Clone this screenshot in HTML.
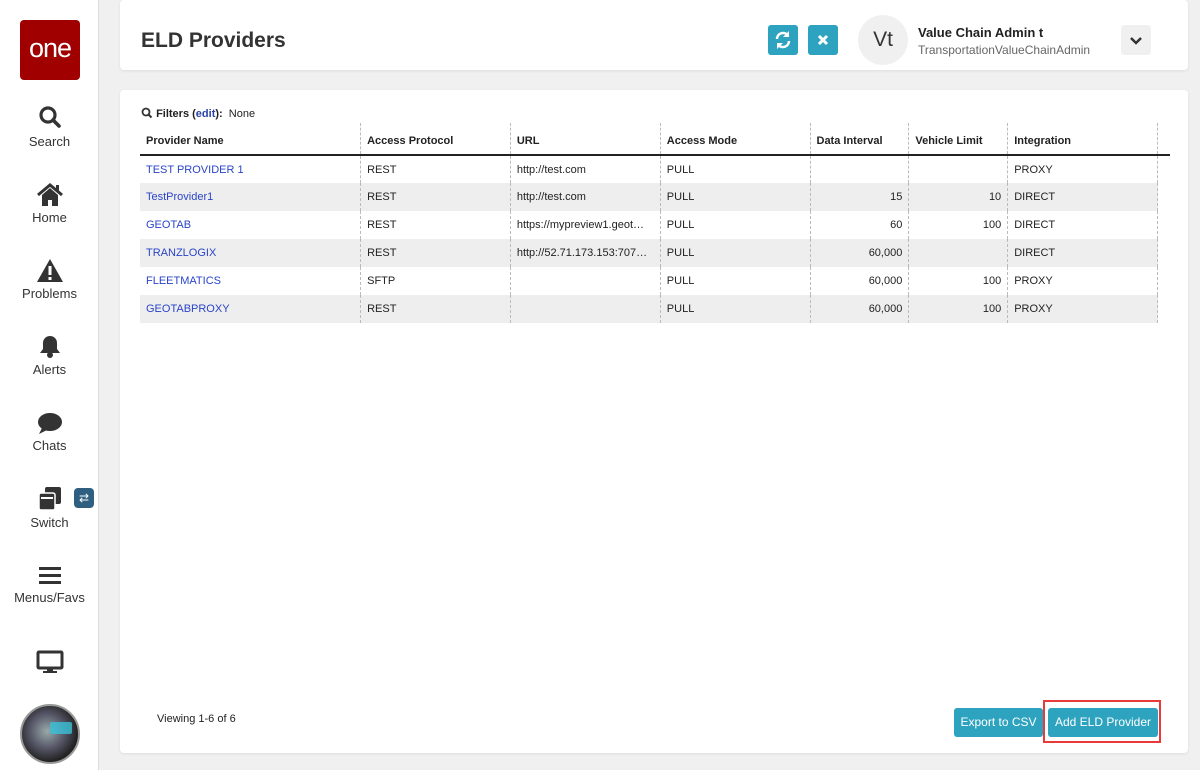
<!DOCTYPE html>
<html><head><meta charset="utf-8"><style>
*{margin:0;padding:0;box-sizing:border-box}
body{width:1200px;height:770px;background:#f0f0f0;font-family:"Liberation Sans",sans-serif;position:relative;overflow:hidden;color:#222}
.side{position:absolute;left:0;top:0;width:99px;height:770px;background:#fff;border-right:1px solid #ddd}
.logo{position:absolute;left:20px;top:20px;width:60px;height:60px;background:#a00000;border-radius:4px;color:#fff;font-size:27px;text-align:center;line-height:56px;letter-spacing:-1px}
.nav{position:absolute;left:0;width:99px;text-align:center;font-size:13px;color:#333}
.nav svg{display:block;margin:0 auto 3px}
.card{position:absolute;background:#fff;border-radius:4px;box-shadow:0 1px 3px rgba(0,0,0,.08)}
.btn{position:absolute;background:#2ea3bf;border-radius:3px;color:#fff}
table{border-collapse:collapse;position:absolute;left:20px;top:33px;width:1030px;font-size:11px}
th{text-align:left;font-weight:bold;height:32px;padding:0 6px;border-bottom:2px solid #222;border-right:1px dashed #bbb;vertical-align:bottom;padding-bottom:7px}
td{height:28px;padding:0 6px;border-right:1px dashed #bbb}
tr:nth-child(odd) td{background:#eee}
tr td.e{border:none;background:#fff!important}
td.a{color:#2a44c8}
td.r{text-align:right}
</style></head><body>
<div class="side">
<div class="logo">one</div>
<div class="nav" style="top:105px"><svg width="24" height="26" viewBox="0 0 24 26"><circle cx="10" cy="10" r="7" fill="none" stroke="#333" stroke-width="3.2"/><path d="M15 15l6 6" stroke="#333" stroke-width="3.6" stroke-linecap="round"/></svg>Search</div>
<div class="nav" style="top:182px"><svg width="28" height="25" viewBox="0 0 28 25"><path d="M2 13L14 3l12 10" fill="none" stroke="#333" stroke-width="3"/><path d="M6 13v11h6v-6h4v6h6V13L14 6z" fill="#333"/><rect x="20" y="3" width="3" height="7" fill="#333"/></svg>Home</div>
<div class="nav" style="top:258px"><svg width="28" height="25" viewBox="0 0 28 25"><path d="M14 1L27 24H1z" fill="#333"/><rect x="12.5" y="8" width="3" height="9" fill="#fff"/><rect x="12.5" y="19" width="3" height="3" fill="#fff"/></svg>Problems</div>
<div class="nav" style="top:334px"><svg width="24" height="25" viewBox="0 0 24 25"><path d="M12 2a7 7 0 0 0-7 7v6l-3 4h20l-3-4V9a7 7 0 0 0-7-7z" fill="#333"/><circle cx="12" cy="21" r="3" fill="#333"/></svg>Alerts</div>
<div class="nav" style="top:412px"><svg width="28" height="23" viewBox="0 0 28 23"><ellipse cx="14" cy="10" rx="12" ry="9" fill="#333"/><path d="M6 16l-3 6 8-4z" fill="#333"/></svg>Chats</div>
<div class="nav" style="top:486px"><svg width="28" height="26" viewBox="0 0 28 26"><rect x="9" y="1" width="16" height="17" rx="2" fill="#333"/><rect x="3" y="7" width="16" height="17" rx="2" fill="#333" stroke="#fff" stroke-width="1.5"/><rect x="5" y="11" width="12" height="2" fill="#fff"/></svg>Switch</div>
<div style="position:absolute;left:74px;top:488px;width:20px;height:20px;background:#2e5f80;border-radius:4px;color:#fff;font-size:12px;text-align:center;line-height:20px">⇄</div>
<div class="nav" style="top:565px"><svg width="24" height="22" viewBox="0 0 24 22"><rect x="1" y="2" width="22" height="3" fill="#333"/><rect x="1" y="9" width="22" height="3" fill="#333"/><rect x="1" y="16" width="22" height="3" fill="#333"/></svg>Menus/Favs</div>
<div class="nav" style="top:650px"><svg width="30" height="24" viewBox="0 0 30 24"><rect x="3" y="2" width="24" height="16" rx="1" fill="none" stroke="#333" stroke-width="3"/><rect x="12" y="18" width="6" height="3" fill="#333"/><rect x="8" y="21" width="14" height="2" fill="#333"/></svg></div>
<div style="position:absolute;left:20px;top:704px;width:60px;height:60px;border-radius:50%;background:radial-gradient(circle at 45% 45%,#9aa 0,#556 40%,#222 70%);border:2px solid #999"></div>
<div style="position:absolute;left:50px;top:722px;width:22px;height:12px;background:#3ac0d8;opacity:.8;border-radius:2px"></div>
</div>

<div class="card" style="left:120px;top:0;width:1068px;height:70px">
<div style="position:absolute;left:21px;top:29px;font-size:21px;font-weight:bold;color:#333">ELD Providers</div>
<div class="btn" style="left:648px;top:25px;width:30px;height:30px"><svg width="30" height="30" viewBox="0 0 30 30"><path d="M9 14a6 6 0 0 1 10.5-4M21 16a6 6 0 0 1-10.5 4" fill="none" stroke="#fff" stroke-width="2.5"/><path d="M21 6v6h-6zM9 24v-6h6z" fill="#fff"/></svg></div>
<div class="btn" style="left:688px;top:25px;width:30px;height:30px"><svg width="30" height="30" viewBox="0 0 30 30"><path d="M11 11l8 8M19 11l-8 8" stroke="#fff" stroke-width="3"/></svg></div>
<div style="position:absolute;left:738px;top:15px;width:50px;height:50px;border-radius:50%;background:#f0f0f0;text-align:center;line-height:50px;font-size:21px;color:#333">Vt</div>
<div style="position:absolute;left:798px;top:25px;font-size:13px;font-weight:bold;color:#222">Value Chain Admin t</div>
<div style="position:absolute;left:798px;top:43px;font-size:12px;color:#666">TransportationValueChainAdmin</div>
<div style="position:absolute;left:1001px;top:25px;width:30px;height:30px;background:#f0f0f0;border-radius:3px"><svg width="30" height="30" viewBox="0 0 30 30"><path d="M10 13l5 5 5-5" fill="none" stroke="#333" stroke-width="2.5"/></svg></div>
</div>

<div class="card" style="left:120px;top:90px;width:1068px;height:663px">
<div style="position:absolute;left:21px;top:17px;font-size:11px"><svg width="12" height="12" viewBox="0 0 12 12" style="vertical-align:-2px"><circle cx="5" cy="5" r="3.5" fill="none" stroke="#333" stroke-width="1.8"/><path d="M7.5 7.5l3 3" stroke="#333" stroke-width="2"/></svg> <b>Filters (<span style="color:#2a44a8">edit</span>):</b> &nbsp;None</div>
<table>
<tr><th style="width:221px">Provider Name</th><th style="width:150px">Access Protocol</th><th style="width:150px">URL</th><th style="width:150px">Access Mode</th><th style="width:99px">Data Interval</th><th style="width:99px">Vehicle Limit</th><th style="width:150px">Integration</th><th style="border-right:none"></th></tr>
<tr><td class="a">TEST PROVIDER 1</td><td>REST</td><td>http://test.com</td><td>PULL</td><td></td><td></td><td>PROXY</td><td class="e"></td></tr>
<tr><td class="a">TestProvider1</td><td>REST</td><td>http://test.com</td><td>PULL</td><td class="r">15</td><td class="r">10</td><td>DIRECT</td><td class="e"></td></tr>
<tr><td class="a">GEOTAB</td><td>REST</td><td>https://mypreview1.geot…</td><td>PULL</td><td class="r">60</td><td class="r">100</td><td>DIRECT</td><td class="e"></td></tr>
<tr><td class="a">TRANZLOGIX</td><td>REST</td><td>http://52.71.173.153:707…</td><td>PULL</td><td class="r">60,000</td><td></td><td>DIRECT</td><td class="e"></td></tr>
<tr><td class="a">FLEETMATICS</td><td>SFTP</td><td></td><td>PULL</td><td class="r">60,000</td><td class="r">100</td><td>PROXY</td><td class="e"></td></tr>
<tr><td class="a">GEOTABPROXY</td><td>REST</td><td></td><td>PULL</td><td class="r">60,000</td><td class="r">100</td><td>PROXY</td><td class="e"></td></tr>
</table>
<div style="position:absolute;left:37px;top:623px;font-size:11px">Viewing 1-6 of 6</div>
<div class="btn" style="left:834px;top:618px;width:89px;height:29px;font-size:12px;text-align:center;line-height:29px">Export to CSV</div>
<div style="position:absolute;left:923px;top:610px;width:118px;height:43px;border:2px solid #e83a3a"></div>
<div class="btn" style="left:928px;top:618px;width:110px;height:29px;font-size:12px;text-align:center;line-height:29px">Add ELD Provider</div>
</div>
</body></html>
